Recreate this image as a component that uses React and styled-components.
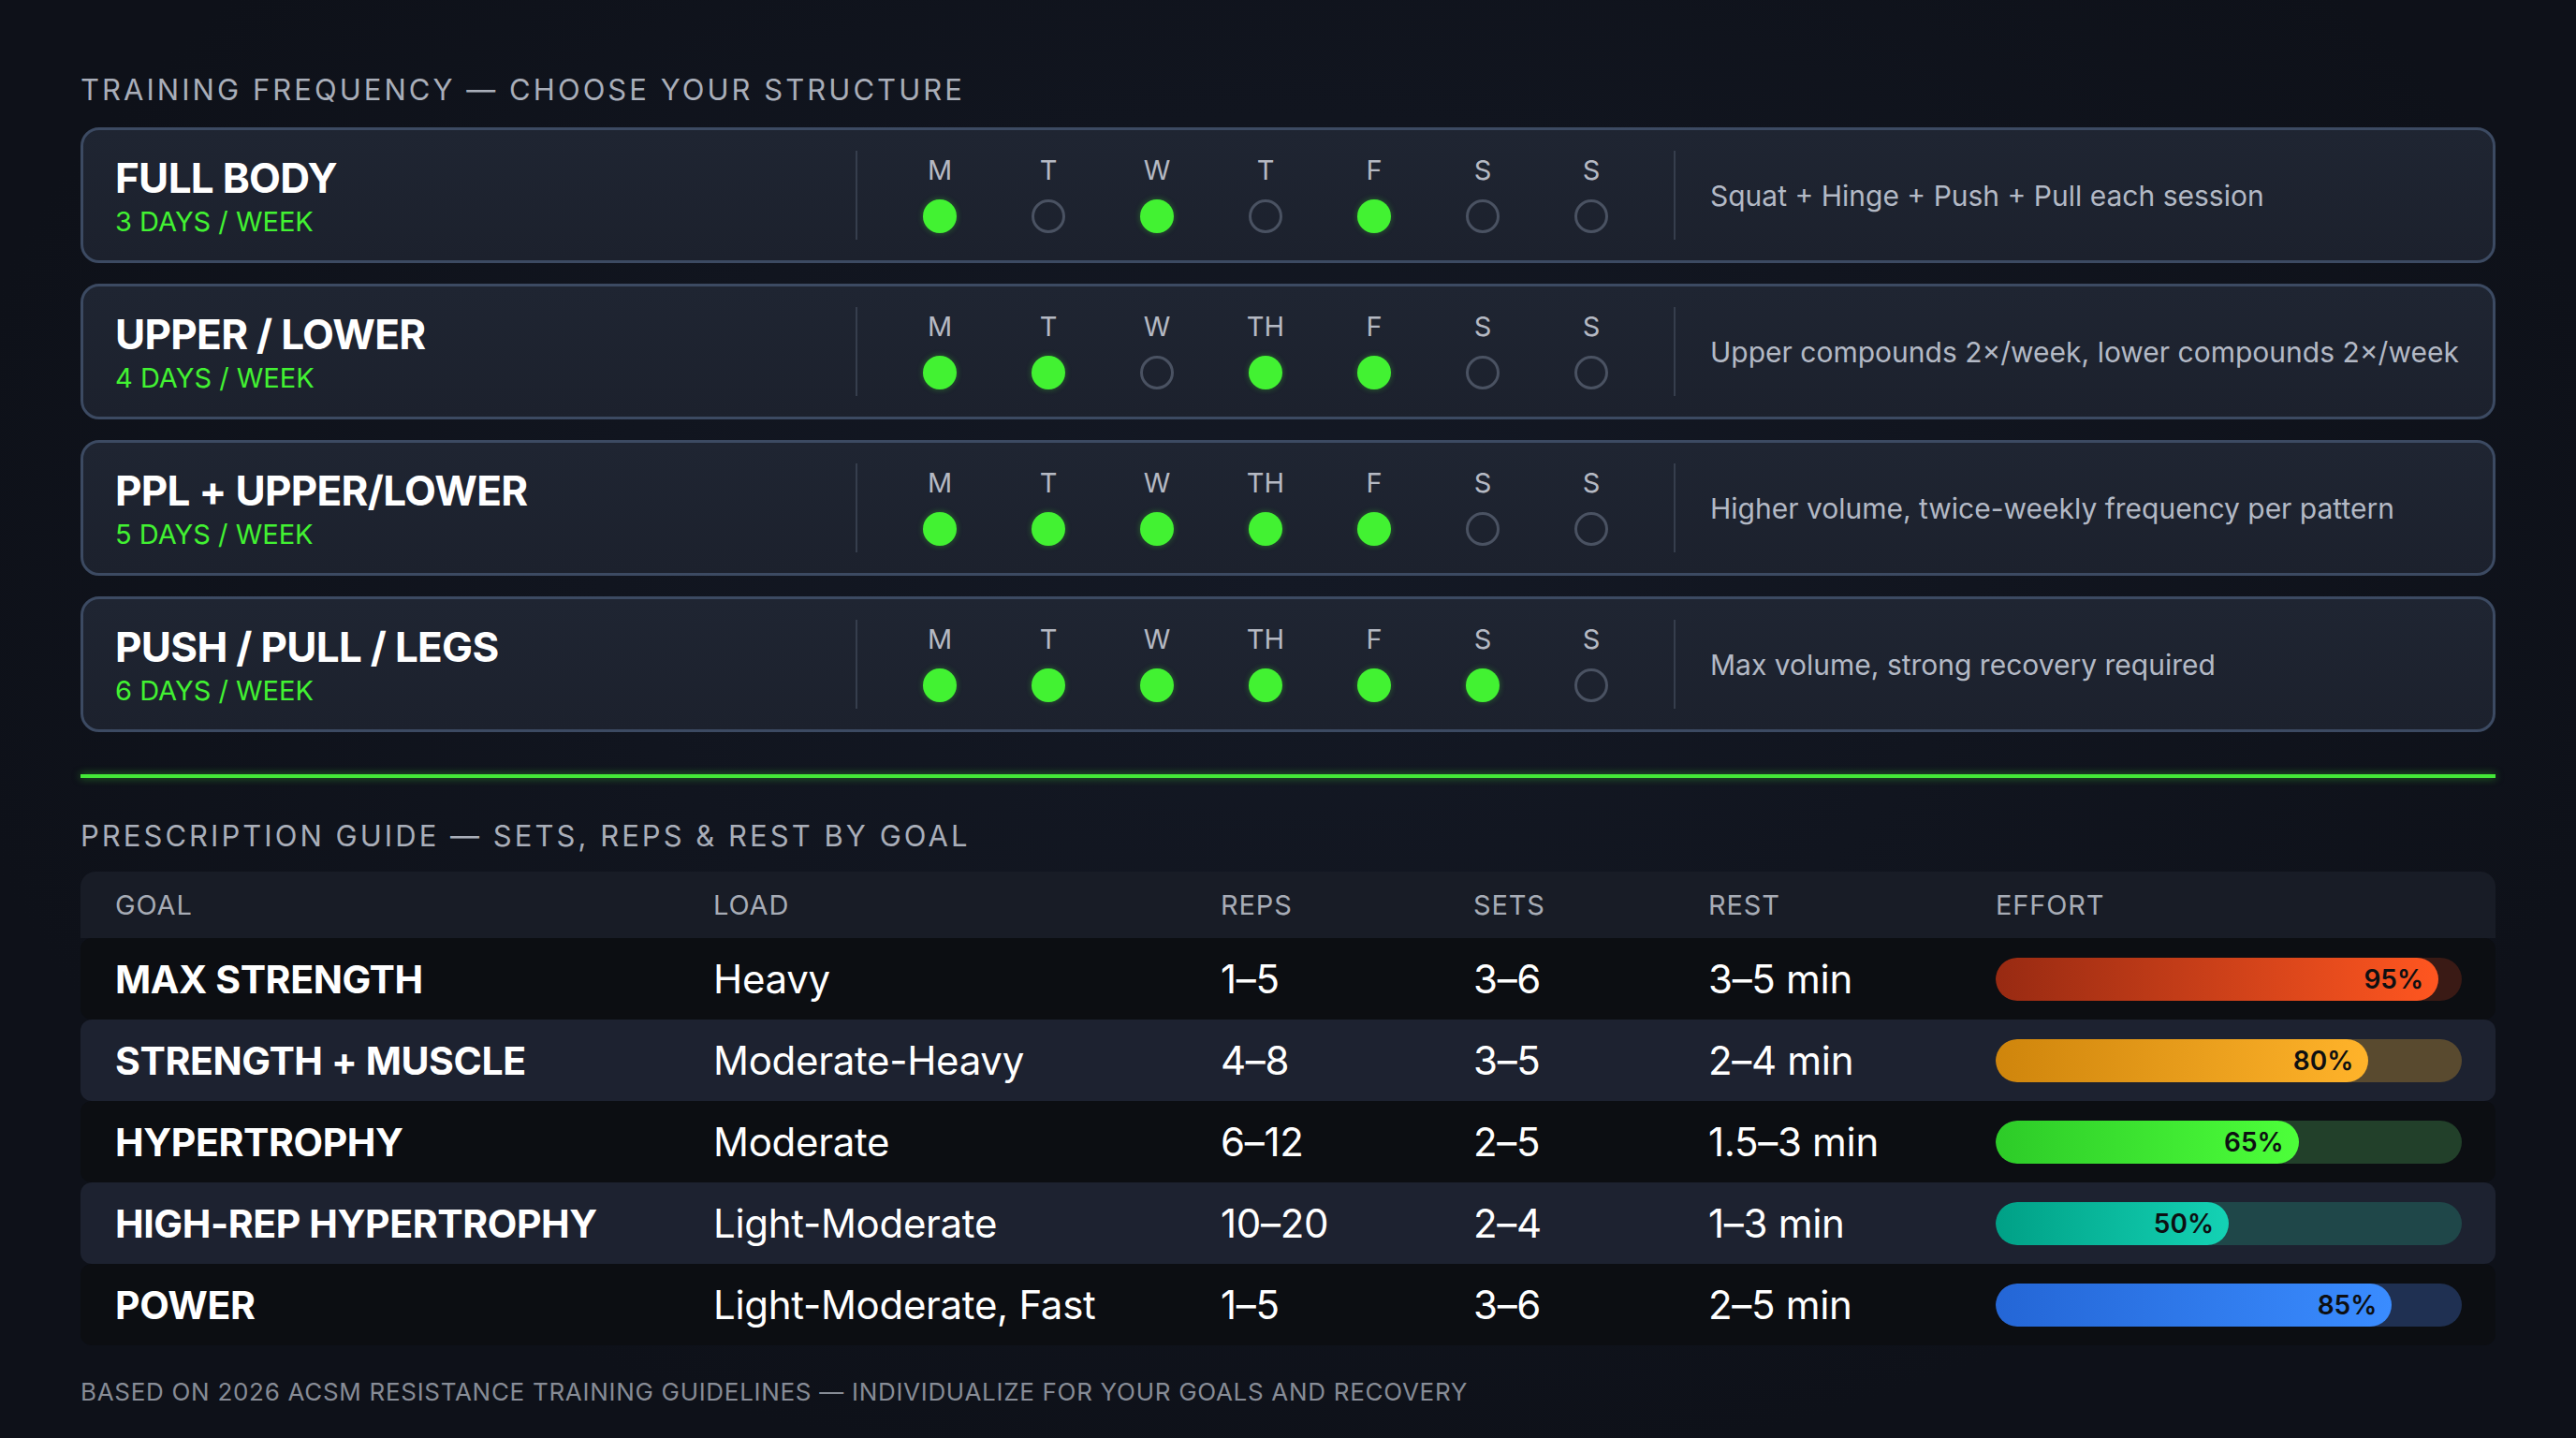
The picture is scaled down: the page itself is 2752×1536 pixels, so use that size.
import React from "react";
import styled, { createGlobalStyle } from "styled-components";

const GlobalStyle = createGlobalStyle`
	html, body {
		margin: 0;
		padding: 0;
		background: #0f121a;
	}
	body {
		font-family: Inter, "Noto Sans", "Liberation Sans", sans-serif;
		color: #ffffff;
	}
`;

const GREEN = "#42f232";

const schedules = [
	{ name: "FULL BODY", days: "3 DAYS / WEEK", labels: ["M", "T", "W", "T", "F", "S", "S"], on: [1, 0, 1, 0, 1, 0, 0], note: "Squat + Hinge + Push + Pull each session" },
	{ name: "UPPER / LOWER", days: "4 DAYS / WEEK", labels: ["M", "T", "W", "TH", "F", "S", "S"], on: [1, 1, 0, 1, 1, 0, 0], note: "Upper compounds 2×/week, lower compounds 2×/week" },
	{ name: "PPL + UPPER/LOWER", days: "5 DAYS / WEEK", labels: ["M", "T", "W", "TH", "F", "S", "S"], on: [1, 1, 1, 1, 1, 0, 0], note: "Higher volume, twice-weekly frequency per pattern" },
	{ name: "PUSH / PULL / LEGS", days: "6 DAYS / WEEK", labels: ["M", "T", "W", "TH", "F", "S", "S"], on: [1, 1, 1, 1, 1, 1, 0], note: "Max volume, strong recovery required" },
];

const goals = [
	{ goal: "MAX STRENGTH", load: "Heavy", reps: "1–5", sets: "3–6", rest: "3–5 min", effort: 95, from: "#982a12", to: "#ff5620", track: "#3a1a15" },
	{ goal: "STRENGTH + MUSCLE", load: "Moderate-Heavy", reps: "4–8", sets: "3–5", rest: "2–4 min", effort: 80, from: "#cf850c", to: "#ffb32a", track: "#594a2f" },
	{ goal: "HYPERTROPHY", load: "Moderate", reps: "6–12", sets: "2–5", rest: "1.5–3 min", effort: 65, from: "#2dcb28", to: "#4dff3a", track: "#22402a" },
	{ goal: "HIGH-REP HYPERTROPHY", load: "Light-Moderate", reps: "10–20", sets: "2–4", rest: "1–3 min", effort: 50, from: "#00a086", to: "#14d2b4", track: "#1f4749" },
	{ goal: "POWER", load: "Light-Moderate, Fast", reps: "1–5", sets: "3–6", rest: "2–5 min", effort: 85, from: "#2466d6", to: "#3a8cff", track: "#1f3052" },
];

const Page = styled.main`
	box-sizing: border-box;
	min-height: 1536px;
	padding: 77px 86px 0;
	background: radial-gradient(ellipse at 50% 40%, #141925 0%, #0e1119 75%);
`;

const SectionTitle = styled.h2`
	margin: ${(p) => p.$top || 0}px 0 0;
	font-size: 31px;
	line-height: 37px;
	font-weight: 400;
	letter-spacing: 0.098em;
	color: #a9aeb9;
`;

const CardList = styled.div`
	display: flex;
	flex-direction: column;
	gap: 22px;
	margin-top: 22px;
`;

const Card = styled.section`
	box-sizing: border-box;
	height: 145px;
	display: grid;
	grid-template-columns: 791px 2px 872px 2px 1fr;
	align-items: center;
	padding-left: 34px;
	background: linear-gradient(180deg, #1f2532 0%, #1c212d 100%);
	border: 3px solid #3c4a62;
	border-radius: 20px;
`;

const NameBlock = styled.div`
	display: flex;
	flex-direction: column;
	gap: 7px;
	padding-top: 3px;
`;

const Name = styled.div`
	font-size: 44px;
	line-height: 46px;
	font-weight: 700;
	letter-spacing: -0.7px;
	color: #ffffff;
`;

const Freq = styled.div`
	font-size: 29px;
	line-height: 34px;
	color: ${GREEN};
`;

const Divider = styled.div`
	width: 2px;
	height: 95px;
	background: #363e4d;
`;

const Days = styled.div`
	display: grid;
	grid-template-columns: repeat(7, 1fr);
	padding: 0 30px;
`;

const Day = styled.div`
	display: flex;
	flex-direction: column;
	align-items: center;
	gap: 14px;
	margin-top: -3px;
`;

const DayLabel = styled.span`
	font-size: 29px;
	line-height: 34px;
	color: #b5b9c3;
`;

const Dot = styled.span`
	box-sizing: border-box;
	width: 36px;
	height: 36px;
	border-radius: 50%;
	background: ${(p) => (p.$on ? GREEN : "transparent")};
	border: ${(p) => (p.$on ? "none" : "3px solid #4a5262")};
	box-shadow: ${(p) => (p.$on ? "0 0 6px rgba(66, 242, 50, 0.35)" : "none")};
`;

const Note = styled.div`
	padding-left: 37px;
	font-size: 30px;
	color: #b3b9c5;
	white-space: nowrap;
`;

const GreenRule = styled.hr`
	margin: 45px 0 0;
	border: none;
	height: 4px;
	background: #44e838;
	box-shadow: 0 0 8px rgba(68, 232, 56, 0.55);
`;

const Table = styled.div`
	margin-top: 20px;
	display: flex;
	flex-direction: column;
`;

const cols = "639px 542px 270px 251px 307px 498px";

const HeadRow = styled.div`
	display: grid;
	grid-template-columns: ${cols};
	align-items: center;
	height: 71px;
	padding: 0 36px 0 37px;
	background: #181c26;
	border-radius: 16px 16px 0 0;
`;

const HeadCell = styled.span`
	font-size: 29px;
	color: #a7acb6;
	letter-spacing: 0.03em;
`;

const Row = styled.div`
	display: grid;
	grid-template-columns: ${cols};
	align-items: center;
	height: 87px;
	padding: 0 36px 0 37px;
	background: ${(p) => (p.$alt ? "#1d2230" : "#0c0e12")};
	border-radius: 12px;
`;

const Goal = styled.span`
	font-size: 41px;
	font-weight: 700;
	color: #ffffff;
	letter-spacing: -0.4px;
`;

const Cell = styled.span`
	font-size: 42px;
	font-weight: 400;
	color: #ffffff;
	letter-spacing: -0.3px;
`;

const Track = styled.div`
	height: 46px;
	border-radius: 23px;
	background: ${(p) => p.$track};
	overflow: hidden;
`;

const Fill = styled.div`
	box-sizing: border-box;
	height: 100%;
	border-radius: 23px;
	background: linear-gradient(90deg, ${(p) => p.$from}, ${(p) => p.$to});
	display: flex;
	align-items: center;
	justify-content: flex-end;
	padding-right: 16px;
	font-size: 28px;
	font-weight: 600;
	color: #0d0f12;
`;

const Footer = styled.footer`
	margin-top: 34px;
	font-size: 26px;
	line-height: 31px;
	letter-spacing: 0.7px;
	color: #878c96;
`;

export default function App() {
	return (
		<>
			<GlobalStyle />
			<Page>
				<SectionTitle>TRAINING FREQUENCY — CHOOSE YOUR STRUCTURE</SectionTitle>
				<CardList>
					{schedules.map((s) => (
						<Card key={s.name}>
							<NameBlock>
								<Name>{s.name}</Name>
								<Freq>{s.days}</Freq>
							</NameBlock>
							<Divider />
							<Days>
								{s.labels.map((l, i) => (
									<Day key={i}>
										<DayLabel>{l}</DayLabel>
										<Dot $on={s.on[i]} />
									</Day>
								))}
							</Days>
							<Divider />
							<Note>{s.note}</Note>
						</Card>
					))}
				</CardList>

				<GreenRule />

				<SectionTitle $top={43}>PRESCRIPTION GUIDE — SETS, REPS &amp; REST BY GOAL</SectionTitle>
				<Table>
					<HeadRow>
						<HeadCell>GOAL</HeadCell>
						<HeadCell>LOAD</HeadCell>
						<HeadCell>REPS</HeadCell>
						<HeadCell>SETS</HeadCell>
						<HeadCell>REST</HeadCell>
						<HeadCell>EFFORT</HeadCell>
					</HeadRow>
					{goals.map((g, i) => (
						<Row key={g.goal} $alt={i % 2 === 1}>
							<Goal>{g.goal}</Goal>
							<Cell>{g.load}</Cell>
							<Cell>{g.reps}</Cell>
							<Cell>{g.sets}</Cell>
							<Cell>{g.rest}</Cell>
							<Track $track={g.track}>
								<Fill $from={g.from} $to={g.to} style={{ width: `${g.effort}%` }}>
									{g.effort}%
								</Fill>
							</Track>
						</Row>
					))}
				</Table>
				<Footer>BASED ON 2026 ACSM RESISTANCE TRAINING GUIDELINES — INDIVIDUALIZE FOR YOUR GOALS AND RECOVERY</Footer>
			</Page>
		</>
	);
}
